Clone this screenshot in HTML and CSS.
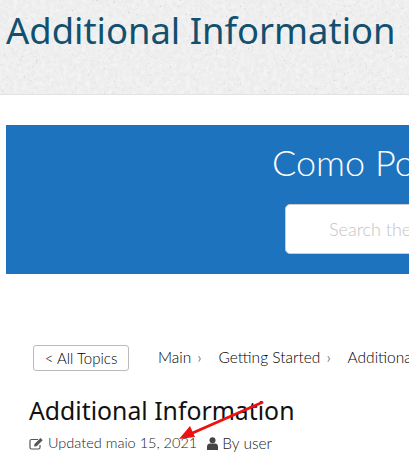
FILE: index.html
```html
<!DOCTYPE html>
<html lang="en">
<head>
    <meta charset="UTF-8">
    <meta name="viewport" content="width=device-width, initial-scale=1.0">
    <title>Additional Information</title>
    <link rel="stylesheet" href="styles.css">
</head>
<body>

    <header class="page-header">
        <svg class="paper" width="409" height="94" aria-hidden="true">
            <filter id="grain">
                <feTurbulence type="fractalNoise" baseFrequency="0.22" numOctaves="4" seed="4"/>
                <feColorMatrix type="matrix" values="0 0 0 0 1  0 0 0 0 1  0 0 0 0 1  0.9 0 0 0 -0.3"/>
            </filter>
            <filter id="specks">
                <feTurbulence type="fractalNoise" baseFrequency="0.5" numOctaves="2" seed="9"/>
                <feColorMatrix type="matrix" values="0 0 0 0 0.4  0 0 0 0 0.4  0 0 0 0 0.4  3 0 0 0 -2.050"/>
            </filter>
            <rect width="409" height="94" filter="url(#grain)"/>
            <rect width="409" height="94" filter="url(#specks)"/>
        </svg>
        <h1 class="page-title">Additional Information</h1>
    </header>

    <section class="hero">
        <h2 class="hero-title">Como Podemos Ajudar?</h2>
        <div class="search-box">Search the documentation...</div>
    </section>

    <main class="content">
        <nav class="topbar">
            <a class="back-button">&lt; All Topics</a>
            <ul class="breadcrumb">
                <li>Main</li>
                <li>Getting Started</li>
                <li>Additional Information</li>
            </ul>
        </nav>

        <h3 class="article-title">Additional Information</h3>
        <p class="meta">
            <svg class="icon" width="15" height="13" viewBox="0 0 15 13" aria-hidden="true">
                <path d="M9 2.500H2.500A1.500 1.500 0 0 0 1 4v6.500A1.500 1.500 0 0 0 2.500 12h7a1.500 1.500 0 0 0 1.500-1.500V8" fill="none" stroke="#555" stroke-width="1.200"/>
                <path d="M5 9.500l.5-2.500L11.500 1l2.200 2.200-6 6z" fill="#555"/>
            </svg>
            <span>Updated maio <span class="nums">15, 2021</span></span>
            <svg class="icon user-icon" width="11" height="13" viewBox="0 0 11 13" aria-hidden="true">
                <circle cx="5.500" cy="3.300" r="3" fill="#444"/>
                <path d="M0 13V9.500C0 7.500 1.500 6.500 3 6.500h5c1.500 0 3 1 3 3V13z" fill="#444"/>
            </svg>
            <span class="author">By user</span>
        </p>
    </main>

    <svg class="arrow" width="100" height="50" viewBox="0 0 100 50" aria-hidden="true">
        <path d="M92 2.500L18 35" stroke="#ee1111" stroke-width="3" stroke-linecap="round"/>
        <path d="M9 39L20 26L25 37z" fill="#ee1111"/>
    </svg>

</body>
</html>
```

FILE: styles.css
```css
html, body {
    overflow: hidden;
}

body {
    position: relative;
    margin: 0;
    width: 409px;
    height: 476px;
    background-color: #ffffff;
    font-family: 'Lato', sans-serif;
    color: #444444;
}

.page-header {
    position: relative;
    height: 94px;
    background-color: #ececec;
    border-bottom: 1px solid #e2e2e2;
    padding-left: 6px;
    white-space: nowrap;
}

.paper {
    position: absolute;
    left: 0;
    top: 0;
}

.page-title {
    position: relative;
    margin: 0;
    padding-top: 9px;
    font-family: 'Noto Sans', sans-serif;
    font-weight: 400;
    font-size: 36.400px;
    line-height: 42px;
    color: #11506f;
}

.hero {
    margin: 30px 0 0 6px;
    width: 800px;
    height: 149px;
    padding-left: 266px;
    padding-top: 13px;
    box-sizing: border-box;
    background-color: #1e73be;
    white-space: nowrap;
}

.hero-title {
    margin: 0;
    font-weight: 300;
    font-size: 36px;
    line-height: 48px;
    color: #ffffff;
}

.search-box {
    margin: 18px 0 0 13px;
    width: 500px;
    height: 50px;
    padding-left: 43px;
    box-sizing: border-box;
    background-color: #ffffff;
    border: 1px solid #cccccc;
    border-radius: 5px;
    font-weight: 300;
    font-size: 18px;
    line-height: 48px;
    color: #c4c4c4;
}

.content {
    padding: 71px 0 0 29px;
}

.topbar {
    display: flex;
    align-items: center;
    gap: 29px;
    margin-left: 4px;
    white-space: nowrap;
}

.back-button {
    flex: none;
    width: 96px;
    height: 26px;
    box-sizing: border-box;
    border: 1px solid #bbbbbb;
    border-radius: 3px;
    font-weight: 300;
    font-size: 15px;
    line-height: 24px;
    text-align: center;
    color: #000000;
}

.breadcrumb {
    display: flex;
    flex: none;
    gap: 17px;
    margin: -3px 0 0 0;
    padding: 0;
    list-style-type: none;
    font-weight: 300;
    font-size: 15.500px;
    color: #000000;
}

.breadcrumb li::after {
    content: "\203A";
    margin-left: 6px;
    color: #444444;
}

.article-title {
    margin: 22px 0 0 0;
    font-family: 'Noto Sans', sans-serif;
    font-weight: 400;
    font-size: 24.800px;
    line-height: 34px;
    color: #111111;
}

.meta {
    display: flex;
    align-items: center;
    margin: 6px 0 0 0;
    font-weight: 300;
    font-size: 14.500px;
    line-height: 20px;
    color: #222222;
}

.icon {
    margin-right: 4px;
}

.user-icon {
    margin-left: 10px;
}

.author {
    font-size: 15.500px;
}

.arrow {
    position: absolute;
    left: 170px;
    top: 400px;
}
```
